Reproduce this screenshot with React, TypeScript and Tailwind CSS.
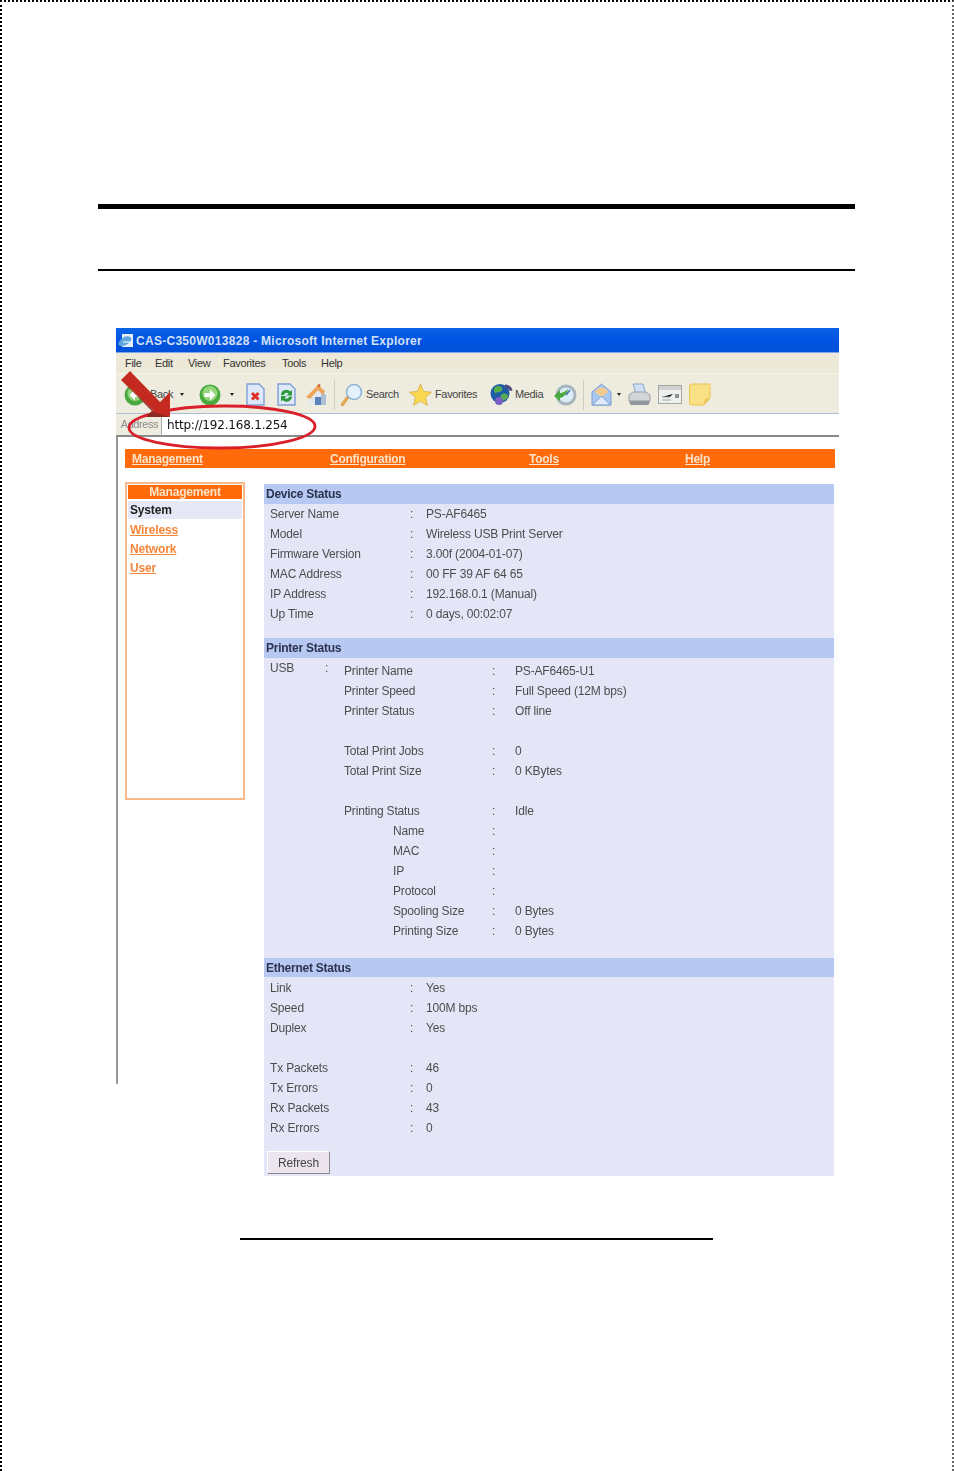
import React from "react";

const font = "font-['Liberation_Sans',Arial,sans-serif]";

function Row({ label, value }: { label: string; value?: string }) {
  return (
    <div className="grid grid-cols-[140px_16px_1fr] h-[20px] items-center pl-[6px]">
      <span>{label}</span>
      <span>:</span>
      <span>{value}</span>
    </div>
  );
}

function PRow({ label, value, sub = false }: { label: string; value?: string; sub?: boolean }) {
  return (
    <div className="grid grid-cols-[148px_23px_1fr] h-[20px] items-center">
      <span className={sub ? "pl-[49px]" : ""}>{label}</span>
      <span>:</span>
      <span>{value}</span>
    </div>
  );
}

function Header({ children, className = "" }: { children: React.ReactNode; className?: string }) {
  return (
    <div className={`h-[20px] flex items-center pl-[2px] bg-[#b7c9f2] font-bold tracking-[-0.25px] text-[#2b3350] ${className}`}>
      {children}
    </div>
  );
}

function Back() {
  return (
    <svg width="22" height="22" viewBox="0 0 22 22">
      <circle cx="11" cy="11" r="10.5" fill="#4aa83f" />
      <circle cx="11" cy="9.5" r="7.500" fill="#93d67c" />
      <path d="M16.500 9H11V5.500L5.500 11l5.500 5.500V13h5.500z" fill="#fff" />
    </svg>
  );
}
function Forward() {
  return (
    <svg width="22" height="22" viewBox="0 0 22 22">
      <circle cx="11" cy="11" r="10.5" fill="#4aa83f" />
      <circle cx="11" cy="9.5" r="7.500" fill="#93d67c" />
      <path d="M5.500 9H11V5.500l5.500 5.500L11 16.500V13H5.500z" fill="#fff" />
    </svg>
  );
}
function Caret() {
  return <span className="block w-0 h-0 border-l-[2.5px] border-r-[2.5px] border-t-[3px] border-l-transparent border-r-transparent border-t-[#222]" />;
}
function Stop() {
  return (
    <svg width="19" height="23" viewBox="0 0 19 23">
      <path d="M1 1h12l5 5v16H1z" fill="#dfe8f8" stroke="#7f9fd6" strokeWidth="1.400" />
      <path d="M6 10l6.500 6.500M12.500 10L6 16.500" stroke="#de2f26" strokeWidth="3" />
    </svg>
  );
}
function Refresh() {
  return (
    <svg width="19" height="23" viewBox="0 0 19 23">
      <path d="M1 1h12l5 5v16H1z" fill="#dfe8f8" stroke="#7f9fd6" strokeWidth="1.400" />
      <path d="M4 12a5.500 5.500 0 0 1 9.500-3.500L15 7v5.500H9.500L11.500 10.500A3 3 0 0 0 6.800 12z" fill="#2b9a3c" />
      <path d="M15 13.500a5.500 5.500 0 0 1-9.500 3.500L4 18.500V13h5.500l-2 2a3 3 0 0 0 4.700-1.500z" fill="#2b9a3c" />
    </svg>
  );
}
function Home() {
  return (
    <svg width="24" height="24" viewBox="0 0 24 24">
      <path d="M4 12v10h17V8l-6-3z" fill="#e3e7ee" />
      <path d="M16 8l5 4v10h-5z" fill="#aebfd8" />
      <path d="M1 14L13 2l7 6-2 4-5-5-8 9z" fill="#eda658" />
      <circle cx="14" cy="2.500" r="1.500" fill="#c86a3a" />
      <rect x="10" y="14" width="6" height="8" fill="#5c82bd" />
    </svg>
  );
}
function SearchIcon() {
  return (
    <svg width="23" height="24" viewBox="0 0 23 24">
      <path d="M8 14L2.500 21.500" stroke="#e0a85a" strokeWidth="3.500" strokeLinecap="round" />
      <circle cx="14" cy="9" r="7.500" fill="#e4f1fb" stroke="#8db4d4" strokeWidth="1.600" />
    </svg>
  );
}
function Star() {
  return (
    <svg width="23" height="24" viewBox="0 0 23 24">
      <path d="M11.500 1l3 7.500 8 .7-6 5.200 1.900 8-6.900-4.300-6.900 4.300 1.900-8-6-5.200 8-.7z" fill="#fbd94f" stroke="#d9b85a" />
    </svg>
  );
}
function Media() {
  return (
    <svg width="24" height="23" viewBox="0 0 24 23">
      <circle cx="10" cy="10.500" r="9.500" fill="#1d5da8" />
      <path d="M4 5c3-3 7-2.500 8 0s-1 4-3 4-4 2-5 0zM12 11c3-1 6 0 6 2s-3 5-6 5-2-5 0-7z" fill="#55ad50" />
      <circle cx="9" cy="18" r="4" fill="#7d5fc4" />
      <path d="M15 1.500c3 0 7 2 7.500 6L20 8c-.5-2-3-3-5-3z" fill="#4f4a82" />
    </svg>
  );
}
function History() {
  return (
    <svg width="24" height="24" viewBox="0 0 24 24">
      <circle cx="13" cy="12" r="10.500" fill="#a7b5be" />
      <circle cx="13" cy="12" r="7.500" fill="#dcecf5" />
      <path d="M13 12l4-5" stroke="#3d6fb5" strokeWidth="1.500" />
      <path d="M1 13l6-6v3c3 0 6-2 8-4-1 5-4 8-8 9v3z" fill="#4aa83f" />
    </svg>
  );
}
function Mail() {
  return (
    <svg width="21" height="23" viewBox="0 0 21 23">
      <path d="M1 9l9.500-8L20 9v13H1z" fill="#a9c8ef" stroke="#7d9ccc" />
      <path d="M4 9c2-6 11-6 13 0l-6.500 5z" fill="#f2c98f" />
      <path d="M1.500 22l9-9 9 9z" fill="#dfeafa" stroke="#7d9ccc" />
    </svg>
  );
}
function Printer() {
  return (
    <svg width="23" height="23" viewBox="0 0 23 23">
      <path d="M5 1h10l3 10H8z" fill="#cfe0f5" stroke="#8fa9cc" />
      <path d="M1 12l4-3h13l4 3v6H1z" fill="#d2d4d6" stroke="#9a9ea3" />
      <path d="M1 18h21l-1.500 4h-18z" fill="#93989d" />
    </svg>
  );
}
function Edit() {
  return (
    <svg width="24" height="19" viewBox="0 0 24 19">
      <rect x=".5" y=".5" width="23" height="18" fill="#eef0ee" stroke="#a5a7a2" />
      <rect x="1" y="1" width="22" height="4" fill="#cfd2d0" />
      <path d="M4 12h8l3-3M4 15h9" stroke="#a8acb0" />
      <rect x="17" y="9" width="4" height="4" fill="#8a9096" />
    </svg>
  );
}
function Note() {
  return (
    <svg width="23" height="23" viewBox="0 0 23 23">
      <path d="M1.500 3q0-2 2-2H22v14l-6 7H3.500q-2 0-2-2z" fill="#f8e184" stroke="#eec255" />
      <path d="M16 22l1-6 5-1z" fill="#eec255" />
    </svg>
  );
}

export default function App() {
  return (
    <div className={`${font} w-[954px] h-[1471px] bg-white border-t-2 border-l-2 border-r-2 border-dotted border-t-black border-l-black border-r-[#666] overflow-hidden`}>
      <div className="mt-[202px] ml-[96px] w-[757px] h-[5px] bg-black" />
      <div className="mt-[60px] ml-[96px] w-[757px] h-[2px] bg-black" />

      <div className="relative mt-[57px] ml-[114px] w-[723px] blur-[0.45px]">
        {/* title bar */}
        <div className="h-[25px] flex items-center pl-[2px] pt-[2px] bg-gradient-to-b from-[#0a62e6] via-[#0054e3] to-[#0050d8] border-b border-b-[#7fa6e8]">
          <svg width="16" height="16" viewBox="0 0 16 16">
            <rect x="4" y="1" width="11" height="13" fill="#e6eefb" />
            <path d="M1 9c3-6 10-7 12-4s-5 8-9 8-4-2-3-4z" fill="#5fa5de" />
            <path d="M5 9h7" stroke="#fff" />
          </svg>
          <span className="ml-[2px] text-[12px] font-bold tracking-[0.28px] text-[#d5e0f4]">CAS-C350W013828 - Microsoft Internet Explorer</span>
        </div>
        {/* menu */}
        <div className="h-[21px] flex items-center bg-[#ece9d8] text-[11px] tracking-[-0.3px] text-[#333] border-b border-b-[#f6f4ea]">
          <span className="ml-[9px] w-[30px]">File</span>
          <span className="w-[33px]">Edit</span>
          <span className="w-[35px]">View</span>
          <span className="w-[59px]">Favorites</span>
          <span className="w-[39px]">Tools</span>
          <span>Help</span>
        </div>
        {/* toolbar */}
        <div className="h-[40px] flex items-center pt-[2px] bg-[#eeecdf] text-[11px] tracking-[-0.35px] text-[#444] border-b border-b-[#aebfd6]">
          <span className="ml-[8px]"><Back /></span>
          <span className="ml-[4px] w-[30px]">Back</span>
          <Caret />
          <span className="ml-[15px]"><Forward /></span>
          <span className="ml-[9px]"><Caret /></span>
          <span className="ml-[12px]"><Stop /></span>
          <span className="ml-[12px]"><Refresh /></span>
          <span className="ml-[9px]"><Home /></span>
          <span className="ml-[5px] w-px h-[30px] bg-[#cfccbc]" />
          <span className="ml-[5px]"><SearchIcon /></span>
          <span className="ml-[3px] w-[43px]">Search</span>
          <Star />
          <span className="ml-[3px] w-[55px]">Favorites</span>
          <Media />
          <span className="ml-[1px] w-[38px]">Media</span>
          <History />
          <span className="ml-[6px] w-px h-[30px] bg-[#cfccbc]" />
          <span className="ml-[7px]"><Mail /></span>
          <span className="ml-[5px]"><Caret /></span>
          <span className="ml-[7px]"><Printer /></span>
          <span className="ml-[7px]"><Edit /></span>
          <span className="ml-[6px]"><Note /></span>
        </div>
        {/* address */}
        <div className="h-[21px] flex items-center bg-white">
          <div className="w-[46px] h-full flex items-center justify-end pr-[3px] bg-[#eeecdf] border-r border-r-[#aaa] text-[11px] tracking-[-0.45px] text-[#8a8a8a]">Address</div>
          <span className="ml-[5px] font-['DejaVu_Sans',sans-serif] text-[12px] tracking-[-0.2px] text-[#111]">http://192.168.1.254</span>
        </div>
        <div className="h-[2px] bg-[#8a8a8a]" />

        {/* page area */}
        <div className="pt-[12px] pl-[9px]">
          <div className="w-[710px] h-[19px] bg-[#ff6a0b] flex items-center text-[12px] font-bold tracking-[-0.25px] text-[#fde3c8] underline">
            <span className="ml-[7px] w-[198px]">Management</span>
            <span className="w-[199px]">Configuration</span>
            <span className="w-[156px]">Tools</span>
            <span>Help</span>
          </div>
          <div className="flex items-start mt-[14px] text-[12px] tracking-[-0.16px] text-[#4d4d4d]">
            <div className="w-[120px] h-[318px] shrink-0 border-2 border-[#f6b88c] p-px">
              <div className="h-[14px] mb-[2px] bg-[#ff6a0b] flex items-center justify-center font-bold text-[#fde3c8]">Management</div>
              <div className="h-[18px] mb-px bg-[#e6e8f6] flex items-center pl-[2px] font-bold text-[#222]">System</div>
              <div className="h-[19px] flex items-center pl-[2px] font-bold text-[#f4853a] underline">Wireless</div>
              <div className="h-[19px] flex items-center pl-[2px] font-bold text-[#f4853a] underline">Network</div>
              <div className="h-[19px] flex items-center pl-[2px] font-bold text-[#f4853a] underline">User</div>
            </div>

            <div className="ml-[19px] mt-[2px] w-[570px] h-[692px] bg-[#e4e6f7]">
              <Header>Device Status</Header>
              <Row label="Server Name" value="PS-AF6465" />
              <Row label="Model" value="Wireless USB Print Server" />
              <Row label="Firmware Version" value="3.00f (2004-01-07)" />
              <Row label="MAC Address" value="00 FF 39 AF 64 65" />
              <Row label="IP Address" value="192.168.0.1 (Manual)" />
              <Row label="Up Time" value="0 days, 00:02:07" />
              <Header className="mt-[14px]">Printer Status</Header>
              <div className="flex items-start h-[283px]">
                <div className="w-[80px] h-[20px] pl-[6px] flex items-center">
                  <span className="w-[55px]">USB</span>
                  <span>:</span>
                </div>
                <div className="flex-1 mt-[3px]">
                  <PRow label="Printer Name" value="PS-AF6465-U1" />
                  <PRow label="Printer Speed" value="Full Speed (12M bps)" />
                  <PRow label="Printer Status" value="Off line" />
                  <div className="h-[20px]" />
                  <PRow label="Total Print Jobs" value="0" />
                  <PRow label="Total Print Size" value="0 KBytes" />
                  <div className="h-[20px]" />
                  <PRow label="Printing Status" value="Idle" />
                  <PRow sub label="Name" />
                  <PRow sub label="MAC" />
                  <PRow sub label="IP" />
                  <PRow sub label="Protocol" />
                  <PRow sub label="Spooling Size" value="0 Bytes" />
                  <PRow sub label="Printing Size" value="0 Bytes" />
                </div>
              </div>
              <Header className="mt-[17px] !h-[19px] mb-px">Ethernet Status</Header>
              <Row label="Link" value="Yes" />
              <Row label="Speed" value="100M bps" />
              <Row label="Duplex" value="Yes" />
              <div className="h-[20px]" />
              <Row label="Tx Packets" value="46" />
              <Row label="Tx Errors" value="0" />
              <Row label="Rx Packets" value="43" />
              <Row label="Rx Errors" value="0" />
              <button className="block mt-[13px] ml-[3px] w-[63px] h-[23px] bg-[#ece4ee] border border-t-white border-l-white border-r-[#8a8a8a] border-b-[#8a8a8a] text-[12px] text-[#444]">Refresh</button>
            </div>
          </div>
        </div>

        {/* window's left edge, which stops short of the page content */}
        <div className="absolute left-0 top-[109px] w-[2px] h-[647px] bg-[#9a9a96]" />

        {/* arrow and ellipse */}
        <svg className="absolute left-0 top-[37px]" width="210" height="90" viewBox="116 365 210 90">
          <ellipse cx="222" cy="427" rx="93" ry="21" fill="none" stroke="#d9202a" strokeWidth="2.800" transform="rotate(-0.500 222 427)" />
          <path d="M121 380L130 371 160 402 170 392 170 417 146 417 153 410z" fill="#c52a20" />
          <path d="M121 380L153 410 146 417 170 417 153 412z" fill="#8a2a22" />
        </svg>
      </div>

      <div className="mt-[62px] ml-[238px] w-[473px] h-[2px] bg-black" />
    </div>
  );
}
